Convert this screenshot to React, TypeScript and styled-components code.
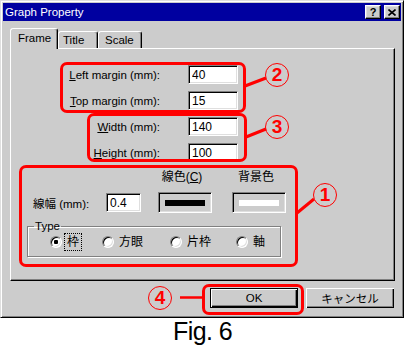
import React from "react";
import styled, { createGlobalStyle } from "styled-components";

const GRAY = "#cccccc";
const RED = "#ff0000";

const GlobalStyle = createGlobalStyle`
  html, body {
    margin: 0;
    padding: 0;
    background: #fff;
  }
  body {
    font-family: "Liberation Sans", "Noto Sans CJK JP", sans-serif;
    font-size: 11.5px;
    color: #000;
  }
`;

const App = () => {
  return (
    <>
      <GlobalStyle />
      <S.Page>
        <S.Window>
          <S.TitleBar>
            <S.TitleText>Graph Property</S.TitleText>
            <S.TitleButtons>
              <S.TitleButton>?</S.TitleButton>
              <S.TitleButton>
                <svg width="8" height="7" viewBox="0 0 8 7">
                  <path d="M0.5 0.5 L7.5 6.5 M7.5 0.5 L0.5 6.5" stroke="#000" strokeWidth="1.6" />
                </svg>
              </S.TitleButton>
            </S.TitleButtons>
          </S.TitleBar>

          <S.Body>
            <S.TabRow>
              <S.Tab $active $w={48} $pl={7}>Frame</S.Tab>
              <S.Tab $w={40} $pl={4}>Title</S.Tab>
              <S.Tab $w={44} $pl={6}>Scale</S.Tab>
            </S.TabRow>

            <S.Panel>
              <S.FieldGrid>
                <S.Label><u>L</u>eft margin (mm):</S.Label>
                <S.TextBox $w={50} readOnly defaultValue="40" />
                <S.Label><u>T</u>op margin (mm):</S.Label>
                <S.TextBox $w={50} readOnly defaultValue="15" />
                <S.Label><u>W</u>idth (mm):</S.Label>
                <S.TextBox $w={50} readOnly defaultValue="140" />
                <S.Label><u>H</u>eight (mm):</S.Label>
                <S.TextBox $w={50} readOnly defaultValue="100" />
              </S.FieldGrid>

              <S.FrameSection>
                <S.ColorGrid>
                  <span />
                  <span />
                  <S.ColorHeader>線色(<u>C</u>)</S.ColorHeader>
                  <S.ColorHeader>背景色</S.ColorHeader>
                  <S.Label $left>線幅 (mm):</S.Label>
                  <S.TextBox $w={35} readOnly defaultValue="0.4" />
                  <S.ColorButton><S.Swatch $color="#000" /></S.ColorButton>
                  <S.ColorButton><S.Swatch $color="#fff" /></S.ColorButton>
                </S.ColorGrid>

                <S.TypeBox>
                  <S.Legend>Type</S.Legend>
                  <S.RadioRow>
                    <S.RadioItem>
                      <S.Radio $checked />
                      <S.RadioLabel $focused>枠</S.RadioLabel>
                    </S.RadioItem>
                    <S.RadioItem>
                      <S.Radio />
                      <S.RadioLabel>方眼</S.RadioLabel>
                    </S.RadioItem>
                    <S.RadioItem>
                      <S.Radio />
                      <S.RadioLabel>片枠</S.RadioLabel>
                    </S.RadioItem>
                    <S.RadioItem>
                      <S.Radio />
                      <S.RadioLabel>軸</S.RadioLabel>
                    </S.RadioItem>
                  </S.RadioRow>
                </S.TypeBox>
              </S.FrameSection>
            </S.Panel>

            <S.ButtonRow>
              <S.Button $default>OK</S.Button>
              <S.Button>キャンセル</S.Button>
            </S.ButtonRow>
          </S.Body>
        </S.Window>

        <S.Caption>Fig. 6</S.Caption>

        {/* red annotations drawn over the dialog */}
        <S.MarkBox $x={60} $y={62} $w={186} $h={51} />
        <S.MarkBox $x={87} $y={113} $w={160} $h={49} />
        <S.MarkBox $x={19} $y={165} $w={279} $h={102} />
        <S.MarkBox $x={202} $y={284} $w={102} $h={31} />
        <S.Leaders width="404" height="345" viewBox="0 0 404 345">
          <line x1="245" y1="86" x2="266" y2="78" stroke={RED} strokeWidth="3" />
          <line x1="246" y1="137" x2="266" y2="129" stroke={RED} strokeWidth="3" />
          <line x1="297" y1="213" x2="314" y2="199" stroke={RED} strokeWidth="3" />
          <line x1="180" y1="297.5" x2="203" y2="297.5" stroke={RED} strokeWidth="2.5" />
        </S.Leaders>
        <S.Badge $x={265} $y={63}>2</S.Badge>
        <S.Badge $x={265} $y={115}>3</S.Badge>
        <S.Badge $x={313} $y={183}>1</S.Badge>
        <S.Badge $x={148} $y={286}>4</S.Badge>
      </S.Page>
    </>
  );
};

export default App;

const S = {
  Page: styled.div`
    position: relative;
    width: 404px;
    height: 345px;
    background: #fff;
    overflow: hidden;
  `,
  Window: styled.div`
    box-sizing: border-box;
    width: 404px;
    height: 318px;
    background: ${GRAY};
    border: 1px solid;
    border-color: #dfdfdf #000 #000 #dfdfdf;
    box-shadow: inset 1px 1px #fff, inset -1px -1px #808080;
    padding: 2px;
    display: flex;
    flex-direction: column;
  `,
  TitleBar: styled.div`
    height: 18px;
    background: #0000a0;
    color: #fff;
    display: flex;
    align-items: center;
    padding: 0 1px 0 2px;
  `,
  TitleText: styled.span`
    flex: 1;
    font-size: 11.5px;
  `,
  TitleButtons: styled.div`
    display: flex;
    gap: 3px;
  `,
  TitleButton: styled.div`
    box-sizing: border-box;
    width: 16px;
    height: 14px;
    background: ${GRAY};
    border: 1px solid;
    border-color: #fff #000 #000 #fff;
    box-shadow: inset -1px -1px #808080, inset 1px 1px #dfdfdf;
    display: flex;
    align-items: center;
    justify-content: center;
    color: #000;
    font-weight: bold;
    font-size: 11px;
  `,
  Body: styled.div`
    flex: 1;
    display: flex;
    flex-direction: column;
    padding: 7px 6px 0 7px;
  `,
  TabRow: styled.div`
    display: flex;
    align-items: flex-end;
    height: 20px;
  `,
  Tab: styled.div<{ $active?: boolean; $w: number; $pl: number }>`
    position: relative;
    box-sizing: border-box;
    width: ${(p) => p.$w}px;
    height: ${(p) => (p.$active ? 21 : 17)}px;
    margin-bottom: ${(p) => (p.$active ? -1 : 0)}px;
    z-index: ${(p) => (p.$active ? 1 : 0)};
    padding-left: ${(p) => p.$pl}px;
    padding-bottom: ${(p) => (p.$active ? 2 : 0)}px;
    background: ${GRAY};
    border: 1px solid;
    border-bottom: none;
    border-color: #fff #000 transparent #fff;
    box-shadow: inset -1px 0 #808080;
    border-radius: 3px 3px 0 0;
    display: flex;
    align-items: center;
    font-size: 11.5px;
  `,
  Panel: styled.div`
    box-sizing: border-box;
    height: 233px;
    border: 1px solid;
    border-color: #fff #000 #000 #fff;
    box-shadow: inset -1px -1px #808080;
  `,
  FieldGrid: styled.div`
    display: grid;
    grid-template-columns: 149px 50px;
    column-gap: 28px;
    row-gap: 7px;
    align-items: center;
    margin-top: 16px;
  `,
  Label: styled.span<{ $left?: boolean }>`
    text-align: ${(p) => (p.$left ? "left" : "right")};
    font-size: 11.5px;
    white-space: nowrap;
  `,
  TextBox: styled.input<{ $w: number }>`
    box-sizing: border-box;
    width: ${(p) => p.$w}px;
    height: 19px;
    margin: 0;
    background: #fff;
    border: 1px solid;
    border-color: #808080 #fff #fff #808080;
    box-shadow: inset 1px 1px #000, inset -1px -1px #dfdfdf;
    padding: 1px 0 0 3px;
    font: 12px "Liberation Sans", sans-serif;
    color: #000;
    outline: none;
  `,
  FrameSection: styled.div`
    margin-top: 8px;
    padding-left: 16px;
  `,
  ColorGrid: styled.div`
    display: grid;
    grid-template-columns: 73px 35px 71px 74px;
    grid-template-rows: 14px 21px;
    row-gap: 8px;
    align-items: center;
    padding-left: 6px;
  `,
  ColorHeader: styled.span`
    justify-self: end;
    width: 54px;
    padding-right: 6px;
    box-sizing: border-box;
    text-align: center;
    font-size: 12px;
    line-height: 14px;
    white-space: nowrap;
  `,
  ColorButton: styled.div`
    justify-self: end;
    box-sizing: border-box;
    width: 54px;
    height: 21px;
    border: 1px solid;
    border-color: #808080 #fff #fff #808080;
    box-shadow: inset 1px 1px #000, inset -1px -1px #dfdfdf;
    display: flex;
    align-items: center;
    justify-content: center;
    padding-top: 1px;
  `,
  Swatch: styled.div<{ $color: string }>`
    width: 40px;
    height: 6px;
    background: ${(p) => p.$color};
  `,
  TypeBox: styled.fieldset`
    box-sizing: border-box;
    width: 254px;
    margin: 7px 0 0 0;
    padding: 0;
    border: 1px solid #808080;
    box-shadow: inset 1px 1px #fff, 1px 1px #fff;
  `,
  Legend: styled.legend`
    margin-left: 6px;
    padding: 0 1px;
    font-size: 11.5px;
    line-height: 12px;
  `,
  RadioRow: styled.div`
    display: grid;
    grid-template-columns: 52px 68px 66px auto;
    height: 20px;
    align-items: center;
    padding: 0 0 4px 22px;
  `,
  RadioItem: styled.div`
    display: flex;
    align-items: center;
    gap: 2px;
  `,
  Radio: styled.span<{ $checked?: boolean }>`
    box-sizing: border-box;
    width: 12px;
    height: 12px;
    border-radius: 50%;
    background: #fff;
    border: 1px solid;
    border-color: #808080 #fff #fff #808080;
    box-shadow: inset 1px 1px #000, inset -1px -1px #dfdfdf;
    display: flex;
    align-items: center;
    justify-content: center;
    &::after {
      content: "";
      width: 4px;
      height: 4px;
      border-radius: 1px;
      background: ${(p) => (p.$checked ? "#000" : "transparent")};
    }
  `,
  RadioLabel: styled.span<{ $focused?: boolean }>`
    border: 1px dotted ${(p) => (p.$focused ? "#000" : "transparent")};
    padding: 1px 2px;
    font-size: 12px;
    line-height: 14px;
  `,
  ButtonRow: styled.div`
    display: flex;
    justify-content: flex-end;
    gap: 8px;
    margin-top: 7px;
    padding-right: 1px;
  `,
  Button: styled.button<{ $default?: boolean }>`
    box-sizing: border-box;
    width: 88px;
    height: 20px;
    margin: 0;
    padding: 0;
    background: ${GRAY};
    border: ${(p) => (p.$default ? "1px solid #000" : "none")};
    box-shadow: inset 1px 1px #fff, inset -1px -1px #000, inset -2px -2px #808080;
    font: 11.5px "Liberation Sans", "Noto Sans CJK JP", sans-serif;
    color: #000;
  `,
  Caption: styled.div`
    height: 27px;
    line-height: 27px;
    text-align: center;
    font: 25px/27px "Liberation Sans", sans-serif;
    letter-spacing: -0.6px;
    padding-left: 1px;
  `,
  MarkBox: styled.div<{ $x: number; $y: number; $w: number; $h: number }>`
    position: absolute;
    left: ${(p) => p.$x}px;
    top: ${(p) => p.$y}px;
    width: ${(p) => p.$w}px;
    height: ${(p) => p.$h}px;
    box-sizing: border-box;
    border: 3px solid ${RED};
    border-radius: 7px;
    pointer-events: none;
  `,
  Leaders: styled.svg`
    position: absolute;
    left: 0;
    top: 0;
    pointer-events: none;
  `,
  Badge: styled.div<{ $x: number; $y: number }>`
    position: absolute;
    left: ${(p) => p.$x}px;
    top: ${(p) => p.$y}px;
    box-sizing: border-box;
    width: 24px;
    height: 24px;
    border: 1.5px solid ${RED};
    border-radius: 50%;
    color: ${RED};
    font: bold 19px/21px "Liberation Sans", sans-serif;
    text-align: center;
  `,
};
